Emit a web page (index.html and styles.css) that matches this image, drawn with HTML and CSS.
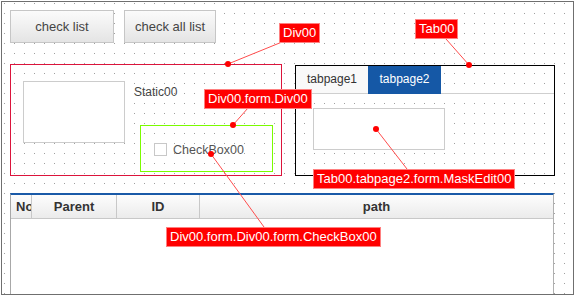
FILE: index.html
```html
<!DOCTYPE html>
<html lang="en">
<head>
    <meta charset="UTF-8">
    <meta name="viewport" content="width=device-width, initial-scale=1.0">
    <link rel="stylesheet" href="styles.css">
    <title>Form Designer</title>
</head>
<body>
    <div class="stage">
        <div class="canvas">
            <div class="toolbar">
                <button class="btn btn-check">check list</button>
                <button class="btn btn-check-all">check all list</button>
            </div>
            <div class="forms">
                <div class="div00">
                    <div class="static-box"></div>
                    <div class="div00-side">
                        <div class="static-text">Static00</div>
                        <div class="inner-div">
                            <label class="checkbox"><span class="check-box"></span>CheckBox00</label>
                        </div>
                    </div>
                </div>
                <div class="tab00">
                    <div class="tab-head">
                        <div class="tab-btn">tabpage1</div>
                        <div class="tab-btn active">tabpage2</div>
                    </div>
                    <div class="tab-page">
                        <div class="mask-edit"></div>
                    </div>
                </div>
            </div>
            <div class="grid">
                <div class="grid-head">
                    <div class="col col-no">No</div>
                    <div class="col col-parent">Parent</div>
                    <div class="col col-id">ID</div>
                    <div class="col col-path">path</div>
                </div>
                <div class="grid-body"></div>
            </div>
        </div>

        <!-- annotation overlay -->
        <svg class="links" width="574" height="295" viewBox="0 0 574 295">
            <g stroke="#ff4d4d" stroke-width="1">
                <line x1="282" y1="42" x2="228" y2="64"/>
                <line x1="446" y1="39" x2="469" y2="65"/>
                <line x1="248" y1="108" x2="233" y2="125"/>
                <line x1="376" y1="129" x2="407" y2="169"/>
                <line x1="211" y1="154" x2="264" y2="227"/>
            </g>
            <g fill="#ff0000">
                <circle cx="228" cy="64" r="3"/>
                <circle cx="469" cy="65" r="3"/>
                <circle cx="233" cy="125" r="3"/>
                <circle cx="376" cy="129" r="3"/>
                <circle cx="211" cy="154" r="3"/>
            </g>
        </svg>
        <div class="tag tag-div00">Div00</div>
        <div class="tag tag-tab00">Tab00</div>
        <div class="tag tag-inner">Div00.form.Div00</div>
        <div class="tag tag-mask">Tab00.tabpage2.form.MaskEdit00</div>
        <div class="tag tag-check">Div00.form.Div00.form.CheckBox00</div>
    </div>
</body>
</html>
```

FILE: styles.css
```css
body {
    margin: 0;
    background-color: #fff;
    font-family: "Liberation Sans", Arial, sans-serif;
}

.stage {
    position: relative;
    width: 574px;
    height: 295px;
    overflow: hidden;
}

.canvas {
    box-sizing: border-box;
    margin: 1px 0 0 1px;
    width: 573px;
    height: 294px;
    border: 1px solid #6f6f6f;
    overflow: hidden;
    background-color: #fff;
    background-image: conic-gradient(from 270deg at 1px 1px, #a0a0a0 90deg, transparent 0);
    background-size: 10px 10px;
    background-position: 2px 1px;
}

.toolbar {
    display: flex;
    gap: 10px;
    padding: 8px 0 0 8px;
}

.btn {
    box-sizing: border-box;
    height: 33px;
    padding: 0;
    border: 1px solid #c6c6c6;
    background: linear-gradient(#fbfbfb, #e4e4e4);
    color: #444;
    font-family: "Liberation Sans", Arial, sans-serif;
    font-size: 13px;
}

.btn-check {
    width: 104px;
}

.btn-check-all {
    width: 92px;
}

.forms {
    display: flex;
    align-items: flex-start;
    gap: 13px;
    margin-top: 21px;
    padding-left: 8px;
}

.div00 {
    box-sizing: border-box;
    display: flex;
    width: 272px;
    height: 112px;
    border: 1px solid #dc143c;
}

.static-box {
    box-sizing: border-box;
    width: 102px;
    height: 62px;
    margin: 16px 0 0 12px;
    border: 1px solid #ccc;
    background-color: #fff;
}

.div00-side {
    margin: 20px 0 0 9px;
}

.static-text {
    font-size: 12px;
    line-height: 14px;
    color: #444;
}

.inner-div {
    box-sizing: border-box;
    width: 133px;
    height: 47px;
    margin: 26px 0 0 6px;
    padding: 17px 0 0 13px;
    border: 1px solid #7cfc00;
}

.checkbox {
    display: flex;
    align-items: center;
    height: 13px;
    font-size: 12.5px;
    color: #555;
}

.check-box {
    box-sizing: border-box;
    width: 13px;
    height: 13px;
    margin-right: 6px;
    border: 1px solid #c8c8c8;
    background-color: #fff;
}

.tab00 {
    box-sizing: border-box;
    width: 260px;
    height: 111px;
    margin-top: 1px;
    border: 1px solid #000;
}

.tab-head {
    display: flex;
    height: 28px;
    box-shadow: inset 0 -1px #cfcfcf;
}

.tab-btn {
    box-sizing: border-box;
    width: 72px;
    height: 28px;
    line-height: 27px;
    text-align: center;
    font-size: 12px;
    color: #333;
    background-color: #f9f9f9;
    border-bottom: 1px solid #cfcfcf;
}

.tab-btn.active {
    width: 73px;
    color: #fff;
    background-color: #1558a6;
    border-bottom-color: #1558a6;
}

.tab-page {
    padding: 14px 0 0 17px;
}

.mask-edit {
    box-sizing: border-box;
    width: 132px;
    height: 42px;
    border: 1px solid #ccc;
    background-color: #fff;
}

.grid {
    box-sizing: border-box;
    width: 544px;
    height: 110px;
    margin: 17px 0 0 8px;
    border-top: 2px solid #1a5aa8;
    border-left: 1px solid #a8a8a8;
    border-right: 1px solid #b0b0b0;
    background-color: #fff;
}

.grid-head {
    display: flex;
    height: 24px;
    box-sizing: border-box;
    border-bottom: 1px solid #c8c8c8;
    background: linear-gradient(#fdfdfd, #ebebeb);
}

.col {
    box-sizing: border-box;
    height: 23px;
    line-height: 23px;
    font-size: 13px;
    font-weight: bold;
    color: #333;
    text-align: center;
    white-space: nowrap;
    overflow: hidden;
    border-right: 1px solid #c8c8c8;
}

.col-no {
    width: 21px;
    padding-left: 5px;
    text-align: left;
}

.col-parent {
    width: 85px;
}

.col-id {
    width: 83px;
}

.col-path {
    flex: 1;
    border-right: none;
}

.links {
    position: absolute;
    top: 0;
    left: 0;
    pointer-events: none;
}

.tag {
    position: absolute;
    box-sizing: border-box;
    height: 20px;
    padding: 0 3px;
    line-height: 18px;
    font-size: 13px;
    color: #fff;
    white-space: nowrap;
    background-color: #ff0000;
    border: 1px solid #ff8080;
}

.tag-div00 {
    left: 279px;
    top: 23px;
}

.tag-tab00 {
    left: 415px;
    top: 19px;
}

.tag-inner {
    left: 204px;
    top: 89px;
}

.tag-mask {
    left: 313px;
    top: 169px;
}

.tag-check {
    left: 166px;
    top: 227px;
}
```
